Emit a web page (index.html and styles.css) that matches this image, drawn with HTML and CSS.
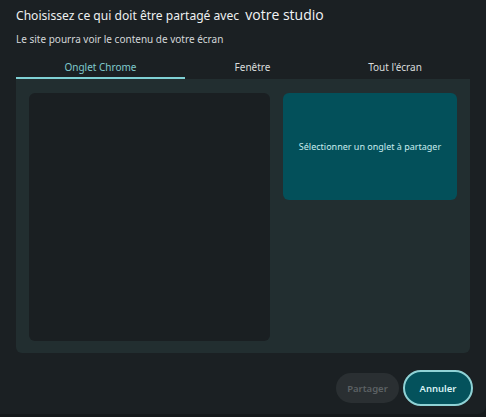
FILE: index.html
```html
<!DOCTYPE html>
<html lang="fr">
<head>
    <meta charset="UTF-8">
    <meta name="viewport" content="width=device-width, initial-scale=1.0">
    <title>Partager l'écran</title>
    <link rel="stylesheet" href="styles.css">
</head>
<body>
<div class="dialog">
    <h1 class="title">Choisissez ce qui doit être partagé avec <span class="origin">votre studio</span></h1>
    <p class="subtitle">Le site pourra voir le contenu de votre écran</p>

    <div class="tabs">
        <div class="tab tab-chrome active">Onglet Chrome</div>
        <div class="tab tab-window">Fenêtre</div>
        <div class="tab tab-screen">Tout l'écran</div>
    </div>

    <div class="panel">
        <div class="preview"></div>
        <div class="side">
            <div class="pick-card">Sélectionner un onglet à partager</div>
        </div>
    </div>

    <div class="actions">
        <button class="btn btn-share" disabled>Partager</button>
        <button class="btn btn-cancel">Annuler</button>
    </div>
</div>
</body>
</html>
```

FILE: styles.css
```css
body {
    margin: 0;
    padding: 0;
    background-color: #15191b;
    font-family: "Noto Sans", "Open Sans", sans-serif;
    color: #e3e6e7;
}

.dialog {
    width: 454px;
    height: 414px;
    padding: 0 16px;
    background-color: #1b2023;
    border-radius: 0 0 8px 0;
    box-sizing: content-box;
    margin-right: 2px;
}

.title {
    margin: 0;
    padding-top: 6px;
    font-size: 12.1px;
    font-weight: 400;
    line-height: 18px;
    color: #eef0f1;
}

.origin {
    margin-left: 3px;
    font-family: "Open Sans", sans-serif;
    font-size: 14px;
    color: #f2f4f5;
}

.subtitle {
    margin: 8px 0 0;
    font-size: 10px;
    line-height: 13px;
    color: #d3d7d9;
}

/* tabs */
.tabs {
    display: flex;
    margin-top: 11px;
}

.tab {
    height: 17px;
    padding-top: 3px;
    font-size: 10px;
    line-height: 15px;
    text-align: center;
    color: #d9dcdd;
    border-bottom: 2px solid transparent;
}

.tab-chrome { width: 169px; }
.tab-window { width: 135px; }
.tab-screen { flex: 1; }

.tab.active {
    color: #7fc9cd;
    border-bottom-color: #7fd0d4;
}

/* content */
.panel {
    display: flex;
    gap: 13px;
    height: 274px;
    padding: 14px 13px 12px;
    box-sizing: border-box;
    background-color: #222e30;
    border-radius: 0 0 6px 6px;
}

.preview {
    width: 241px;
    background-color: #1a1f22;
    border-radius: 6px;
}

.side {
    flex: 1;
}

.pick-card {
    display: flex;
    align-items: center;
    justify-content: center;
    height: 107px;
    background-color: #03505a;
    border-radius: 6px;
    font-size: 9px;
    color: #c8ecee;
}

/* footer */
.actions {
    display: flex;
    justify-content: flex-end;
    align-items: center;
    gap: 4px;
    margin-top: 17px;
    margin-right: -3px;
}

.btn {
    font-family: "Noto Sans", sans-serif;
    font-size: 9.5px;
    font-weight: 600;
    border: none;
    border-radius: 18px;
    cursor: pointer;
}

.btn-share {
    width: 63px;
    height: 30px;
    background-color: #2a2f32;
    color: #5c6164;
}

.btn-cancel {
    width: 70px;
    height: 36px;
    background-color: #04525c;
    color: #d7f1f2;
    border: 2px solid #8fd2d5;
}
```
